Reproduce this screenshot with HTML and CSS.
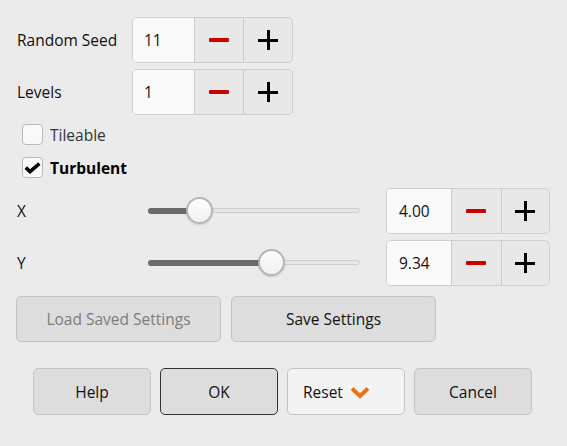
FILE: index.html
```html
<!DOCTYPE html>
<html>
<head>
<meta charset="utf-8">
<link rel="stylesheet" href="styles.css">
</head>
<body>
<div class="dialog">
  <div class="field-row">
    <span class="label">Random Seed</span>
    <div class="spin">
      <div class="spin-value">11</div>
      <div class="spin-btn"><span class="minus"></span></div>
      <div class="spin-btn"><span class="plus"></span></div>
    </div>
  </div>
  <div class="field-row">
    <span class="label">Levels</span>
    <div class="spin">
      <div class="spin-value">1</div>
      <div class="spin-btn"><span class="minus"></span></div>
      <div class="spin-btn"><span class="plus"></span></div>
    </div>
  </div>

  <div class="checks">
    <label class="check-row">
      <span class="box"></span>
      <span class="check-text">Tileable</span>
    </label>
    <label class="check-row">
      <span class="box">
        <svg width="17" height="12" viewBox="0 0 17 12"><path d="M1.8 5.6 L6 9.6 L15.4 1.6" fill="none" stroke="#000" stroke-width="3.6" stroke-linejoin="miter" stroke-linecap="butt"/></svg>
      </span>
      <span class="check-text bold">Turbulent</span>
    </label>
  </div>

  <div class="slider-row first">
    <span class="axis">X</span>
    <div class="slider">
      <div class="track"></div>
      <div class="fill" style="width:51px"></div>
      <div class="thumb" style="left:38px"></div>
    </div>
    <div class="spin wide">
      <div class="spin-value">4.00</div>
      <div class="spin-btn"><span class="minus"></span></div>
      <div class="spin-btn"><span class="plus"></span></div>
    </div>
  </div>
  <div class="slider-row">
    <span class="axis">Y</span>
    <div class="slider">
      <div class="track"></div>
      <div class="fill" style="width:123px"></div>
      <div class="thumb" style="left:110px"></div>
    </div>
    <div class="spin wide">
      <div class="spin-value">9.34</div>
      <div class="spin-btn"><span class="minus"></span></div>
      <div class="spin-btn"><span class="plus"></span></div>
    </div>
  </div>

  <div class="settings-row">
    <button class="btn settings disabled">Load Saved Settings</button>
    <button class="btn settings">Save Settings</button>
  </div>

  <div class="action-row">
    <button class="btn action">Help</button>
    <button class="btn action default">OK</button>
    <button class="btn action reset">Reset
      <svg class="chev" width="20" height="13" viewBox="0 0 20 13"><path d="M2 2.5 L10 10 L18 2.5" fill="none" stroke="#ec7211" stroke-width="4"/></svg>
    </button>
    <button class="btn action">Cancel</button>
  </div>
</div>
</body>
</html>
```

FILE: styles.css
```css
html, body {
  margin: 0;
  padding: 0;
  background: #ebebeb;
}
body {
  font-family: "Open Sans", "Noto Sans", sans-serif;
  font-size: 15.5px;
  color: #111;
  width: 567px;
  height: 446px;
  overflow: hidden;
}
.dialog {
  padding: 17px 16px 0 16px;
}
.field-row {
  display: flex;
  align-items: center;
  height: 46px;
  margin-bottom: 6px;
}
.label {
  width: 115px;
  padding-left: 1px;
}
.spin {
  display: flex;
  box-sizing: border-box;
  height: 46px;
  width: 161px;
  border: 1px solid #cfcfcf;
  border-radius: 5px;
  overflow: hidden;
  background: #e8e8e8;
}
.spin-value {
  box-sizing: border-box;
  width: 62px;
  padding-left: 11px;
  background: #fafafa;
  border-right: 1px solid #cbcbcb;
  display: flex;
  align-items: center;
}
.spin-btn {
  box-sizing: border-box;
  width: 49px;
  display: flex;
  align-items: center;
  justify-content: center;
}
.spin-btn + .spin-btn {
  border-left: 1px solid #cbcbcb;
}
.spin.wide {
  width: 164px;
}
.spin.wide .spin-value {
  width: 66px;
  padding-left: 12px;
}
.spin.wide .spin-btn {
  width: 49px;
}
.minus {
  display: block;
  width: 20px;
  height: 4px;
  background: #cc0000;
  border-radius: 1px;
}
.plus {
  display: block;
  position: relative;
  width: 20px;
  height: 20px;
}
.plus::before, .plus::after {
  content: "";
  position: absolute;
  background: #000;
}
.plus::before {
  left: 0;
  top: 8.5px;
  width: 20px;
  height: 3px;
}
.plus::after {
  left: 8.5px;
  top: 0;
  width: 3px;
  height: 20px;
}

.checks {
  margin-top: -3px;
  padding-left: 6px;
}
.check-row {
  display: flex;
  align-items: center;
  height: 33px;
}
.box {
  box-sizing: border-box;
  width: 21px;
  height: 21px;
  border: 1px solid #b9b9b9;
  border-radius: 4px;
  background: #f9f9f9;
  display: flex;
  align-items: center;
  justify-content: center;
}
.check-text {
  margin-left: 7px;
  color: #333;
}
.check-text.bold {
  font-weight: bold;
  color: #000;
}

.slider-row {
  display: flex;
  align-items: center;
  height: 46px;
  margin-top: 6px;
}
.slider-row.first {
  margin-top: 4px;
}
.axis {
  width: 131px;
  padding-left: 1px;
}
.slider {
  position: relative;
  width: 212px;
  height: 28px;
  margin-right: 26px;
}
.track {
  position: absolute;
  left: 0;
  right: 0;
  top: 11px;
  height: 5px;
  box-sizing: border-box;
  border: 1px solid #cdcdcd;
  background: #e6e6e6;
  border-radius: 3px;
}
.fill {
  position: absolute;
  left: 0;
  top: 11px;
  height: 6px;
  background: #6a6a6a;
  border-radius: 3px;
}
.thumb {
  position: absolute;
  top: 0;
  width: 27px;
  height: 27px;
  box-sizing: border-box;
  border-radius: 50%;
  border: 2px solid #bcb3ab;
  background: linear-gradient(#fdfdfd, #f1f1f1);
  box-shadow: 0 1px 2px rgba(0,0,0,0.15);
}

.btn {
  font-family: "Open Sans", "Noto Sans", sans-serif;
  font-size: 15.5px;
  color: #111;
  box-sizing: border-box;
  background: #dddddd;
  border: 1px solid #c3c3c3;
  border-radius: 5px;
  padding: 0;
}
.settings-row {
  display: flex;
  gap: 10px;
  margin-top: 10px;
}
.btn.settings {
  width: 205px;
  height: 46px;
}
.btn.disabled {
  color: #7c7c7c;
}
.action-row {
  display: flex;
  gap: 9px;
  margin-top: 26px;
  padding-left: 17px;
}
.btn.action {
  width: 118px;
  height: 47px;
}
.btn.default {
  border-color: #333;
}
.btn.reset {
  background: #f3f3f3;
  display: flex;
  align-items: center;
  justify-content: flex-start;
  gap: 7px;
  padding-left: 15px;
}
.chev {
  display: block;
  margin-top: 2px;
}
```
